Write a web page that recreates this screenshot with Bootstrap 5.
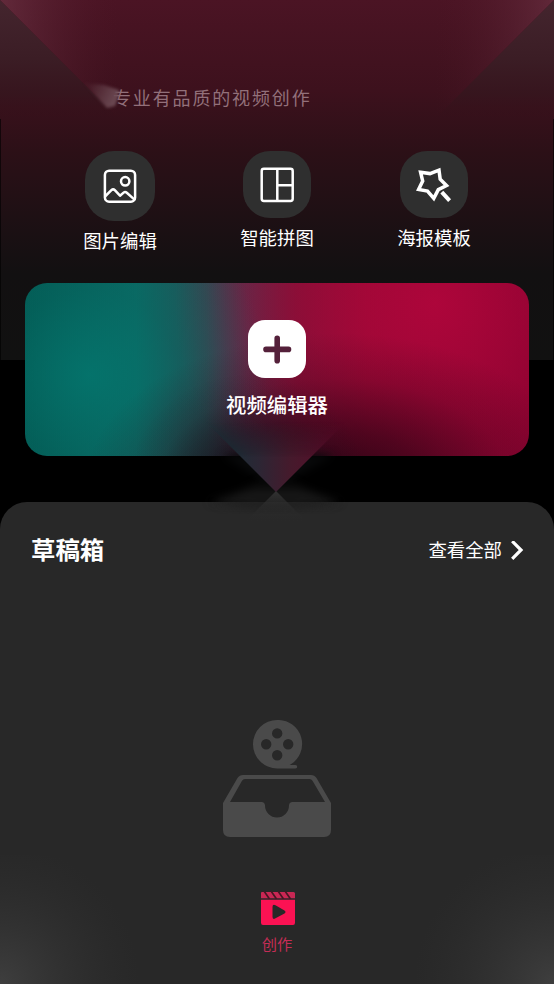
<!DOCTYPE html>
<html lang="zh-CN">
<head>
<meta charset="utf-8">
<meta name="viewport" content="width=device-width, initial-scale=1">
<title>视频创作</title>
<link href="https://cdn.jsdelivr.net/npm/bootstrap@5.3.0/dist/css/bootstrap.min.css" rel="stylesheet">
<style>
body{background:#000;color:#fff;font-family:"Noto Sans CJK SC",sans-serif;overflow:hidden}
.screen{height:984px;isolation:isolate}
.backdrop{left:0;top:0;z-index:-1}
.overlay-art{left:0;top:0;pointer-events:none}
.slogan{padding:85px 0 0 113px;font-size:18px;line-height:24px;letter-spacing:1.85px;color:#92707a;font-weight:400}
.tools{margin-top:42px;height:132px;padding:0 83px}
.tool{width:74px}
.tool-icon{width:68px;height:67px;border-radius:27px;background:#2f2f2f}
.tool-icon.big{width:70px;height:70px;border-radius:29px}
.tool-name{font-size:18.4px;line-height:24px;margin-top:7px}
.editor{margin:0 25px;height:173px;border-radius:22px;padding-top:37px;
background:
radial-gradient(ellipse 120px 115px at 222px 205px,rgba(10,16,22,.75),rgba(12,18,24,.42) 40%,rgba(14,20,26,.1) 75%,transparent),
radial-gradient(ellipse 250px 150px at 310px 200px,rgba(28,2,14,.88),rgba(36,3,17,.62) 35%,rgba(50,3,20,.22) 70%,transparent),
radial-gradient(ellipse 200px 190px at 65px 92px,rgba(3,120,112,.75),rgba(3,108,102,.35) 45%,transparent 90%),
radial-gradient(ellipse 260px 260px at 410px 20px,rgba(180,5,60,.85),rgba(165,3,52,.45) 55%,transparent),
linear-gradient(90deg,#045851 0,#0c6862 22%,#2b4c53 36%,#55304b 44%,#76173a 54%,#8d0d35 68%,#800330 100%)}
.plus{width:58px;height:58px;border-radius:17px;background:#fff}
.editor-name{font-size:20.4px;line-height:28px;font-weight:500;margin-top:12px}
.drafts{margin-top:46px;height:353px;background:#282828;border-radius:27px 27px 0 0;padding:29px 30px 0 31px}
.drafts-title{font-size:24.4px;line-height:36px;font-weight:700}
.view-all{font-size:18.4px;line-height:36px}
.empty{margin-top:153px;padding-right:2px}
.tabs{height:129px;background:#282828;padding:36px 0 0 1px}
.tab-name{font-size:15.3px;line-height:22px;color:#c52d56;font-weight:400;margin:5px 1px 0 0}
</style>
<script src="https://cdn.jsdelivr.net/npm/bootstrap@5.3.0/dist/js/bootstrap.bundle.min.js"></script>
</head>
<body>
<main class="screen position-relative">
<svg class="backdrop position-absolute" width="554" height="984" aria-hidden="true">
<defs>
<linearGradient id="wine" x2="0" y2="1"><stop stop-color="#4b1424"/><stop offset=".25" stop-color="#3d111d"/><stop offset=".42" stop-color="#2c1017"/><stop offset=".6" stop-color="#1e1014"/><stop offset=".76" stop-color="#121011"/><stop offset="1" stop-color="#111"/></linearGradient>
<linearGradient id="side" x2="0" y2="1"><stop stop-color="#44252e"/><stop offset=".5" stop-color="#3b1d25"/><stop offset=".8" stop-color="#35161e" stop-opacity=".8"/><stop offset="1" stop-color="#34111a" stop-opacity="0"/></linearGradient>
<linearGradient id="fadeL"><stop stop-color="#72384a" stop-opacity=".6"/><stop offset="1" stop-color="#501828" stop-opacity="0"/></linearGradient>
<linearGradient id="fadeR" x1="1" x2="0"><stop stop-color="#72384a" stop-opacity=".55"/><stop offset="1" stop-color="#501828" stop-opacity="0"/></linearGradient>
</defs>
<rect width="554" height="360" fill="url(#wine)"/>
<path d="M0 0H118V118Z" fill="url(#fadeL)"/>
<path d="M554 0H436V118Z" fill="url(#fadeR)"/>
<path d="M0 0 118 118H0Z" fill="url(#side)"/>
<path d="M554 0 436 118H554Z" fill="url(#side)"/>
<path d="M.5 119V360M553.5 119V360" stroke="#000" stroke-opacity=".6"/>
</svg>

<div class="slogan">专业有品质的视频创作</div>
<nav class="tools d-flex justify-content-between text-center text-nowrap">
<div class="tool d-flex flex-column align-items-center">
<div class="tool-icon big d-flex align-items-center justify-content-center">
<svg width="36" height="36" viewBox="0 0 36 36" fill="none" stroke="#fff" stroke-width="2.5" stroke-linejoin="round"><rect x="2.9" y="2.7" width="30.2" height="31" rx="4.2"/><circle cx="23.2" cy="13.3" r="4.2"/><path d="M3 28.5 9.4 22.1Q11.2 20.5 12.8 22.2L18 27.7 21.6 24.6Q23.2 23.3 24.8 24.7L32.5 31.6"/></svg>
</div><div class="tool-name">图片编辑</div></div>
<div class="tool d-flex flex-column align-items-center">
<div class="tool-icon d-flex align-items-center justify-content-center">
<svg width="36" height="36" viewBox="0 0 36 36" fill="none" stroke="#fff" stroke-width="2.5"><rect x="2.7" y="1.8" width="31" height="32.2" rx="2.2"/><path d="M18.3 2V34M18.3 18.2H33.5"/></svg>
</div><div class="tool-name">智能拼图</div></div>
<div class="tool d-flex flex-column align-items-center">
<div class="tool-icon d-flex align-items-center justify-content-center">
<svg width="36" height="36" viewBox="0 0 36 36" fill="none" stroke="#fff" stroke-width="3.5"><path d="M4.6 5.3 14 6.6 23 3.2 24.2 12.2 30.5 18.6 22.3 22.6 17.8 31.4 11.5 24 2.6 22.5 6.7 14Z"/><path d="M25.8 25.2 33.6 33.6" stroke-width="4"/></svg>
</div><div class="tool-name">海报模板</div></div>
</nav>

<section class="editor d-flex flex-column align-items-center">
<div class="plus d-flex align-items-center justify-content-center">
<svg width="30" height="30" viewBox="0 0 30 30" stroke="#54203a" stroke-width="5.6" stroke-linecap="round"><path d="M15.2 4.4V26.8M4 15.4H26.5"/></svg>
</div>
<div class="editor-name">视频编辑器</div>
</section>

<section class="drafts">
<div class="d-flex justify-content-between">
<div class="drafts-title">草稿箱</div>
<div class="view-all d-flex align-items-center">查看全部
<svg class="ms-2 mt-1" width="14" height="20" viewBox="0 0 14 20" fill="none" stroke="#fff" stroke-width="3.2"><path d="M2.2 .2 11 9 2.2 17.8"/></svg>
</div></div>
<div class="empty d-flex justify-content-center">
<svg width="108" height="118" viewBox="0 0 108 118" fill="#4a4a4a">
<path transform="translate(-.8)" fill-rule="evenodd" d="M55 0A24 24 0 0 1 67.5 45H73.3A1.7 1.7 0 0 1 73.3 48.4H55A24.2 24.2 0 0 1 55 0ZM55 8.2a5.2 5.2 0 1 0 0 10.4a5.2 5.2 0 1 0 0-10.4ZM44 19a5.2 5.2 0 1 0 0 10.4a5.2 5.2 0 1 0 0-10.4ZM66 19a5.2 5.2 0 1 0 0 10.4a5.2 5.2 0 1 0 0-10.4ZM55 30a5.2 5.2 0 1 0 0 10.4a5.2 5.2 0 1 0 0-10.4Z"/>
<path fill-rule="evenodd" d="M0 83 14.5 58Q16.5 55 20 55H88Q91.5 55 93.5 58L108 83V110Q108 117 101 117H7Q0 117 0 110ZM7 82H38.5Q41.8 82 42 85.5A12 12 0 0 0 66 85.5Q66.2 82 69.5 82H102L89.5 60.8Q88.5 59 86.5 59H22Q20 59 19 60.8Z"/>
</svg>
</div>
</section>

<nav class="tabs d-flex flex-column align-items-center">
<svg width="36" height="36" viewBox="0 0 36 36"><path d="M2 1H33.5Q35 1 35 2.5V7.2H1V2Q1 1 2 1Z" fill="#c92754"/><path d="M4 0 9.5 8M11 0 16.5 8M18 0 23.5 8M25 0 30.5 8" stroke="#451723" stroke-width="1.7"/><path fill-rule="evenodd" d="M1 8.8H35V31.8Q35 34 33 34H3Q1 34 1 31.8ZM12.5 16V25.8Q12.5 29 15.5 27.3L24.5 22.5Q26.5 21 24.5 19.5L15.5 14.2Q12.5 12.8 12.5 16Z" fill="#fb1253"/></svg>
<div class="tab-name">创作</div>
</nav>

<svg class="overlay-art position-absolute" width="554" height="984" aria-hidden="true">
<defs>
<filter id="soft" x="-30%" y="-60%" width="160%" height="220%" color-interpolation-filters="sRGB"><feGaussianBlur stdDeviation="4"/></filter>
<filter id="glintSoft" x="-30%" y="-30%" width="160%" height="160%" color-interpolation-filters="sRGB"><feGaussianBlur stdDeviation="1.8"/></filter>
<linearGradient id="tip" x1="215" x2="340" y1="0" y2="0" gradientUnits="userSpaceOnUse"><stop stop-color="#123238"/><stop offset=".35" stop-color="#2c2634"/><stop offset=".6" stop-color="#451a2c"/><stop offset="1" stop-color="#5a0a28"/></linearGradient>
<linearGradient id="tipFade" x2="0" y2="1"><stop stop-color="#fff" stop-opacity="0"/><stop offset=".5" stop-color="#fff"/></linearGradient>
<mask id="tipMask"><rect x="205" y="422" width="142" height="71" fill="url(#tipFade)"/></mask>
<linearGradient id="haze" x2="0" y2="1"><stop stop-color="#202020" stop-opacity="0"/><stop offset="1" stop-color="#202020"/></linearGradient>
<linearGradient id="peak" x2="0" y2="1"><stop stop-color="#323232"/><stop offset="1" stop-color="#2c2c2c" stop-opacity="0"/></linearGradient>
<radialGradient id="cornerL" cx="0" cy="984" r="140" gradientUnits="userSpaceOnUse"><stop stop-color="#484848" stop-opacity=".7"/><stop offset="1" stop-color="#333" stop-opacity="0"/></radialGradient>
<radialGradient id="cornerR" cx="554" cy="984" r="140" gradientUnits="userSpaceOnUse"><stop stop-color="#484848" stop-opacity=".7"/><stop offset="1" stop-color="#333" stop-opacity="0"/></radialGradient>
<linearGradient id="glint" x1="118" y1="98" x2="90" y2="84" gradientUnits="userSpaceOnUse"><stop stop-color="#6c4a53"/><stop offset="1" stop-color="#72515a" stop-opacity=".1"/></linearGradient>
</defs>
<path d="M84 83 104 85 119 90 118 98 115 106 107 108Z" fill="url(#glint)" filter="url(#glintSoft)"/>
<path d="M222 455H334L290 480H262Z" fill="#08090a" filter="url(#soft)"/>
<path d="M208 502Q244 494 262 478H290Q308 494 342 502Z" fill="url(#haze)" filter="url(#soft)"/>
<path d="M214 502Q276 516 338 502Z" fill="#1e1e1e" filter="url(#soft)"/>
<path d="M276 491 306 521H246Z" fill="url(#peak)"/>
<path d="M206 422H346L276 492Z" fill="url(#tip)" mask="url(#tipMask)"/>
<rect y="855" width="150" height="129" fill="url(#cornerL)"/>
<rect x="404" y="855" width="150" height="129" fill="url(#cornerR)"/>
</svg>
</main>
</body>
</html>
